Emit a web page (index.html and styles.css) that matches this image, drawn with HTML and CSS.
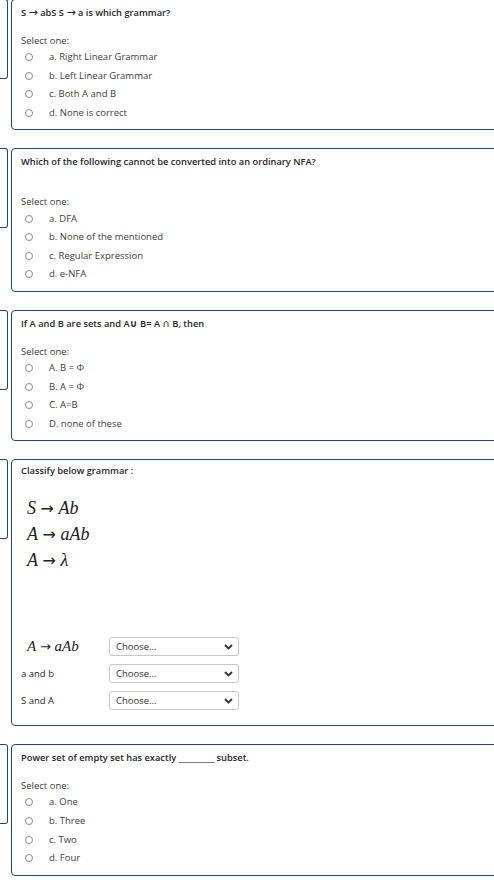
FILE: index.html
```html
<!DOCTYPE html>
<html lang="en">
<head>
<meta charset="utf-8">
<title>Quiz</title>
<link rel="stylesheet" href="styles.css">
</head>
<body>
<div class="page">

  <div class="que">
    <div class="info"></div>
    <div class="content">
      <div class="qtext"><p>S <span class="sym">→</span> abS S <span class="sym">→</span> a is which grammar?</p></div>
      <div class="prompt">Select one:</div>
      <div class="answer">
        <div class="opt"><span class="radio"></span><span class="lbl">a. Right Linear Grammar</span></div>
        <div class="opt"><span class="radio"></span><span class="lbl">b. Left Linear Grammar</span></div>
        <div class="opt"><span class="radio"></span><span class="lbl">c. Both A and B</span></div>
        <div class="opt"><span class="radio"></span><span class="lbl">d. None is correct</span></div>
      </div>
    </div>
  </div>

  <div class="que">
    <div class="info"></div>
    <div class="content">
      <div class="qtext"><p>Which of the following cannot be converted into an ordinary NFA?</p><p class="blank">&nbsp;</p></div>
      <div class="prompt">Select one:</div>
      <div class="answer">
        <div class="opt"><span class="radio"></span><span class="lbl">a. DFA</span></div>
        <div class="opt"><span class="radio"></span><span class="lbl">b. None of the mentioned</span></div>
        <div class="opt"><span class="radio"></span><span class="lbl">c. Regular Expression</span></div>
        <div class="opt"><span class="radio"></span><span class="lbl">d. e-NFA</span></div>
      </div>
    </div>
  </div>

  <div class="que">
    <div class="info"></div>
    <div class="content">
      <div class="qtext"><p>If A and B are sets and A<b class="sym cup">∪</b> B= A <span class="sym cap">∩</span> B, then</p></div>
      <div class="prompt">Select one:</div>
      <div class="answer">
        <div class="opt"><span class="radio"></span><span class="lbl">A. B = Φ</span></div>
        <div class="opt"><span class="radio"></span><span class="lbl">B. A = Φ</span></div>
        <div class="opt"><span class="radio"></span><span class="lbl">C. A=B</span></div>
        <div class="opt"><span class="radio"></span><span class="lbl">D. none of these</span></div>
      </div>
    </div>
  </div>

  <div class="que">
    <div class="info"></div>
    <div class="content content-match">
      <div class="qtext qtext-match"><p>Classify below grammar :</p></div>
      <div class="math">
        <div class="mline"><i>S</i> <span class="arr">→</span> <i>Ab</i></div>
        <div class="mline"><i>A</i> <span class="arr">→</span> <i>aAb</i></div>
        <div class="mline"><i>A</i> <span class="arr">→</span> <i>λ</i></div>
      </div>
      <div class="rows">
        <div class="rlabel rlabel-math"><i>A</i> <span class="arr">→</span> <i>aAb</i></div>
        <div class="select"><span>Choose...</span><svg width="9" height="6" viewBox="0 0 9 6"><path d="M1 1 L4.5 4.5 L8 1" fill="none" stroke="#333" stroke-width="1.8"/></svg></div>
        <div class="rlabel">a and b</div>
        <div class="select"><span>Choose...</span><svg width="9" height="6" viewBox="0 0 9 6"><path d="M1 1 L4.5 4.5 L8 1" fill="none" stroke="#333" stroke-width="1.8"/></svg></div>
        <div class="rlabel">S and A</div>
        <div class="select"><span>Choose...</span><svg width="9" height="6" viewBox="0 0 9 6"><path d="M1 1 L4.5 4.5 L8 1" fill="none" stroke="#333" stroke-width="1.8"/></svg></div>
      </div>
    </div>
  </div>

  <div class="que">
    <div class="info"></div>
    <div class="content">
      <div class="qtext"><p>Power set of empty set has exactly _________ subset.</p></div>
      <div class="prompt">Select one:</div>
      <div class="answer">
        <div class="opt"><span class="radio"></span><span class="lbl">a. One</span></div>
        <div class="opt"><span class="radio"></span><span class="lbl">b. Three</span></div>
        <div class="opt"><span class="radio"></span><span class="lbl">c. Two</span></div>
        <div class="opt"><span class="radio"></span><span class="lbl">d. Four</span></div>
      </div>
    </div>
  </div>

</div>
</body>
</html>
```

FILE: styles.css
```css
html, body {
  margin: 0;
  padding: 0;
  background: #fff;
  overflow: hidden;
}

body {
  font-family: "Open Sans", "Liberation Sans", sans-serif;
  font-size: 9.5px;
  color: #333;
}

.page {
  display: flex;
  flex-direction: column;
  gap: 18px;
  margin-top: -1px;
}

.que {
  display: flex;
  align-items: flex-start;
  gap: 3px;
}

.info {
  flex: none;
  width: 7px;
  height: 78px;
  border: 1px solid #23477a;
  border-left: none;
  border-radius: 0 3px 3px 0;
}

.content {
  flex: 1;
  margin-right: -14px;
  border: 1px solid #23477a;
  border-radius: 4px;
  padding: 7px 9px 7px 9px;
}

.qtext p {
  margin: 0;
  height: 12px;
}

.qtext {
  line-height: 12px;
  font-size: 9.3px;
  font-weight: 600;
  color: #262626;
  margin-bottom: 16px;
}

.sym {
  font-family: "DejaVu Sans", sans-serif;
  font-weight: 400;
  font-size: 11px;
  line-height: 1px;
}

.cup {
  font-weight: 700;
  font-size: 10px;
}

.cap {
  font-size: 10px;
}

.prompt {
  line-height: 12px;
  color: #3a3a3a;
  margin-bottom: 1px;
}

.opt {
  display: flex;
  align-items: center;
  height: 18.6px;
}

.radio {
  flex: none;
  box-sizing: border-box;
  width: 8px;
  height: 8px;
  margin-left: 4px;
  border: 1px solid #8c8c8c;
  border-radius: 50%;
}

.lbl {
  margin-left: 16px;
  color: #404040;
  line-height: 12px;
}

.content-match {
  padding-top: 5px;
  padding-bottom: 15px;
}

.qtext-match {
  margin-bottom: 0;
}

.math {
  margin-top: 18px;
  padding-left: 6px;
  font-family: "Liberation Serif", "DejaVu Serif", serif;
  font-size: 18px;
  color: #222;
}

.mline {
  height: 26px;
  line-height: 26px;
}

.arr {
  font-family: "DejaVu Sans", sans-serif;
  font-size: 16px;
  line-height: 1px;
}

.rows {
  margin-top: 64px;
  display: grid;
  grid-template-columns: 88px 130px;
  grid-auto-rows: 19px;
  row-gap: 8px;
  align-items: center;
}

.rlabel {
  color: #262626;
}

.rlabel-math {
  padding-left: 6px;
  font-family: "Liberation Serif", "DejaVu Serif", serif;
  font-size: 15px;
  line-height: 19px;
  height: 19px;
  color: #222;
}

.rlabel-math .arr {
  font-size: 13px;
}

.select {
  box-sizing: border-box;
  height: 19px;
  width: 130px;
  display: flex;
  align-items: center;
  justify-content: space-between;
  padding: 0 5px 0 6px;
  border: 1px solid #c9c9c9;
  border-radius: 3px;
  color: #333;
}

.select svg {
  display: block;
}
```
